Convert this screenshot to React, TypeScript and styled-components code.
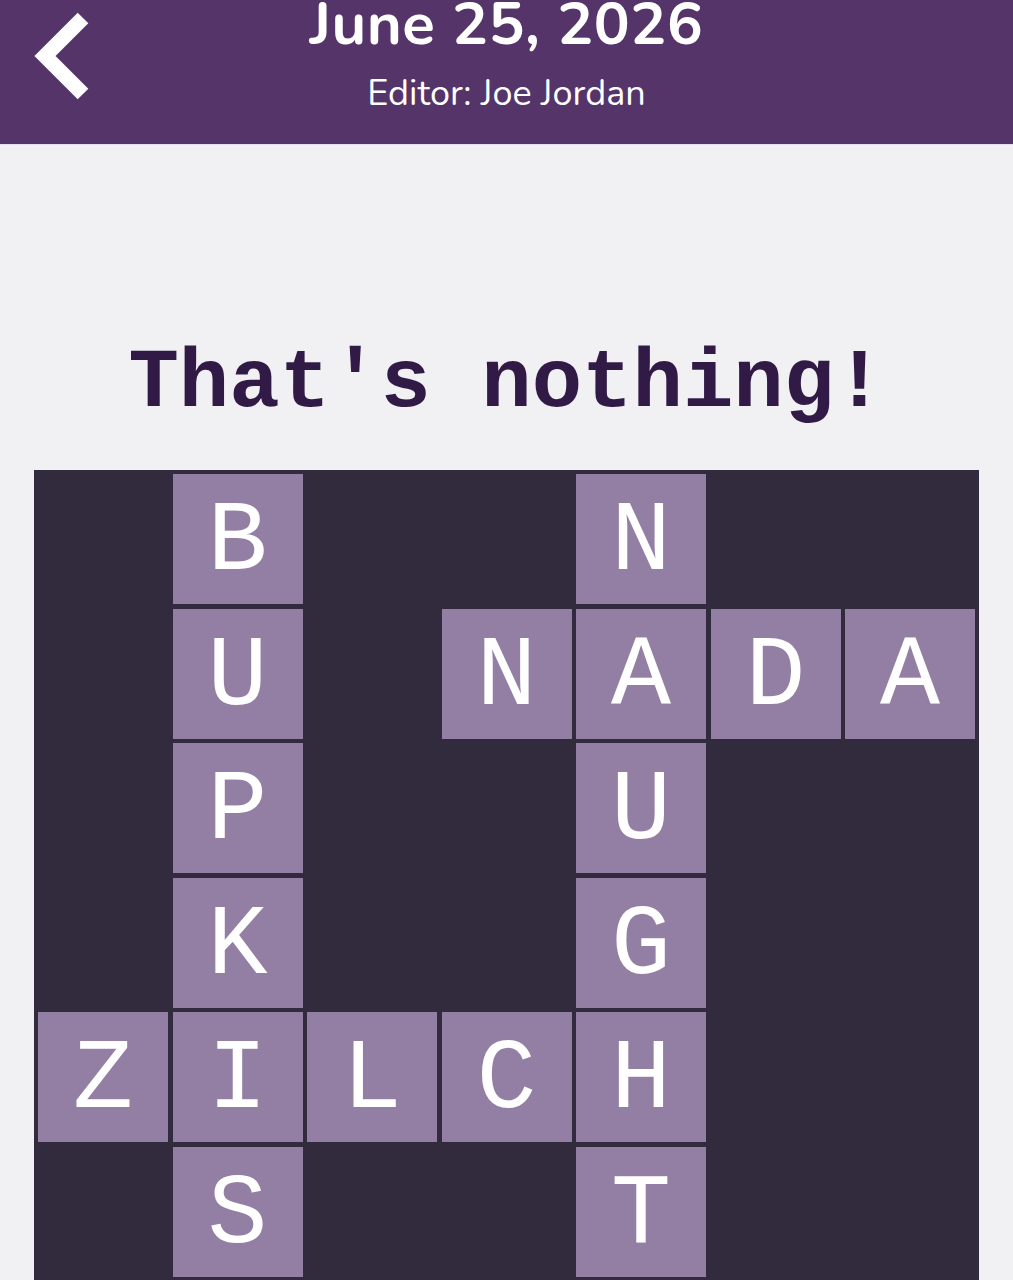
import React from "react";
import styled, { createGlobalStyle } from "styled-components";

const Global = createGlobalStyle`
  html, body { margin: 0; padding: 0; background: #f1f0f3; }
  body { font-family: "Lato", "Noto Sans", sans-serif; }
`;

const Page = styled.div`
  width: 1013px;
  min-height: 1280px;
  background: #f1f0f3;
  display: flex;
  flex-direction: column;
`;

const Header = styled.header`
  height: 145px;
  background: #553569;
  position: relative;
  display: flex;
  flex-direction: column;
  align-items: center;
  overflow: hidden;
  border-bottom: 1px solid #e6dcec;
  box-sizing: border-box;
`;

const BackButton = styled.button`
  position: absolute;
  left: 30px;
  top: 8px;
  width: 66px;
  height: 96px;
  padding: 0;
  border: none;
  background: transparent;
  display: flex;
  align-items: center;
  justify-content: center;
  cursor: pointer;
`;

const DateTitle = styled.h1`
  margin: -8px 0 0 0;
  font-family: "Nunito", "Lato", sans-serif;
  font-weight: 700;
  font-size: 60px;
  line-height: 64px;
  letter-spacing: 0.5px;
  color: #ffffff;
`;

const Editor = styled.div`
  margin-top: 18px;
  font-family: "Nunito", "Lato", sans-serif;
  font-weight: 400;
  font-size: 36px;
  line-height: 40px;
  color: #ffffff;
`;

const Main = styled.main`
  display: flex;
  flex-direction: column;
  align-items: center;
  padding-top: 197px;
`;

const PuzzleTitle = styled.h2`
  margin: 0;
  font-family: "Courier New", "Liberation Mono", monospace;
  font-weight: 700;
  font-size: 84px;
  line-height: 84px;
  color: #321a47;
`;

const Grid = styled.div`
  margin-top: 44px;
  width: 945px;
  box-sizing: border-box;
  padding: 4px;
  background: #322a3d;
  display: grid;
  grid-template-columns: repeat(7, 130px);
  grid-auto-rows: 130px;
  gap: 4.5px;
`;

const Cell = styled.div<{ $filled: boolean }>`
  background: ${(p) => (p.$filled ? "#937fa3" : "transparent")};
  display: flex;
  align-items: center;
  justify-content: center;
  padding-top: 8px;
  box-sizing: border-box;
  font-family: "Courier New", "Liberation Mono", monospace;
  font-size: 100px;
  font-weight: 400;
  color: #ffffff;
  line-height: 1;
`;

const rows = [
  "_B__N__",
  "_U_NADA",
  "_P__U__",
  "_K__G__",
  "ZILCH__",
  "_S__T__",
  "_______",
];

function Chevron() {
  return (
    <svg width="60" height="92" viewBox="0 0 60 92" aria-hidden="true">
      <polyline
        points="50,8 12,46 50,84"
        fill="none"
        stroke="#ffffff"
        strokeWidth="15"
        strokeLinejoin="miter"
        strokeLinecap="butt"
      />
    </svg>
  );
}

export default function App() {
  return (
    <Page>
      <Global />
      <Header>
        <BackButton aria-label="Back">
          <Chevron />
        </BackButton>
        <DateTitle>June 25, 2026</DateTitle>
        <Editor>Editor: Joe Jordan</Editor>
      </Header>
      <Main>
        <PuzzleTitle>That's nothing!</PuzzleTitle>
        <Grid>
          {rows.flatMap((row, r) =>
            row.split("").map((ch, c) => (
              <Cell key={`${r}-${c}`} $filled={ch !== "_"}>
                {ch !== "_" ? ch : ""}
              </Cell>
            ))
          )}
        </Grid>
      </Main>
    </Page>
  );
}
